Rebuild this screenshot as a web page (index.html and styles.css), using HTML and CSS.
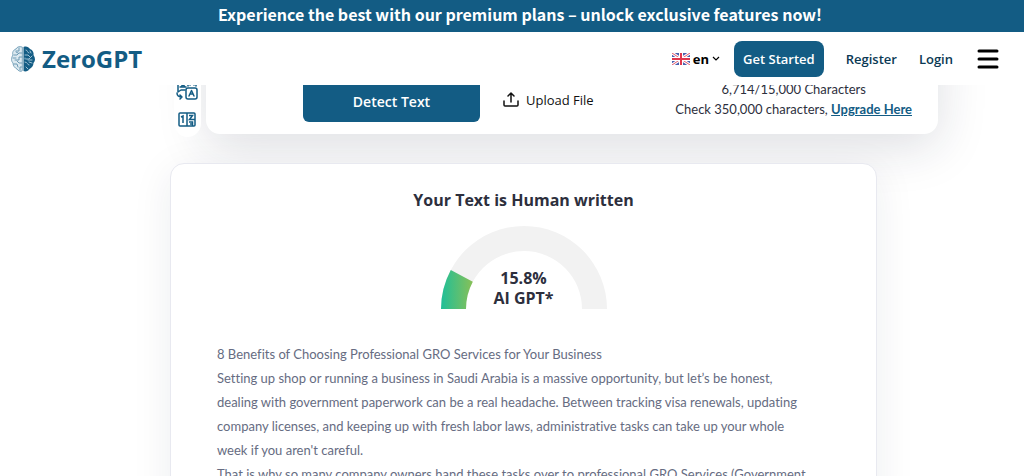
FILE: index.html
```
<!DOCTYPE html>
<html lang="en">
<head>
    <meta charset="UTF-8">
    <meta name="viewport" content="width=device-width, initial-scale=1">
    <title>ZeroGPT</title>
    <link rel="stylesheet" href="styles.css">
</head>
<body>
    <header class="header">
        <div class="banner">Experience the best with our premium plans – unlock exclusive features now!</div>
        <nav class="navbar">
            <a class="logo" href="#">
                <svg width="26" height="26" viewBox="0 0 26 26" fill="none" stroke-linecap="round">
                    <path d="M13.500 1c3-1 5 0 6.500 2 3 1 4 4 3.500 6 2 3 2 6 0 8 0 3-2 5-4 6-1 2-4 3-6 2z" fill="#135c84"/>
                    <path d="M16 4c2 0 1 3 3 3M15 9h3l2 2M22 10l-3 3h-3M15 16c3 0 2 3 4 3M22 17l-3-1M16 21l2 2M20 5l1 2M15 12v1M18 14l4 0" stroke="#9fc1d4"/>
                    <path d="M12 1C9 0 7 1 6 3 3 4 2 7 3 9c-2 3-2 6 0 8 0 3 2 5 4 6 1 2 4 3 5 2z" fill="#dce9f0" stroke="#7ba5bc"/>
                    <path d="M9 2v3H6M12 7H9L7 9H4M12 11H9v3H5M3 12h3M12 17H9l-2-2M4 18h3l1 3M12 21h-2v3M6 6l2 1" stroke="#6c9ab4"/>
                </svg>
                <span>ZeroGPT</span>
            </a>
            <button class="lang" type="button">
                <svg width="18" height="12" viewBox="0 0 18 12">
                    <path d="M0 0h18v12H0z" fill="#4a5fae"/>
                    <path d="M0 0l18 12M18 0L0 12" stroke="#fff" stroke-width="3"/>
                    <path d="M0 0l18 12M18 0L0 12" stroke="#e5596b"/>
                    <path d="M9 0v12M0 6h18" stroke="#fff" stroke-width="4"/>
                    <path d="M9 0v12M0 6h18" stroke="#e0374d" stroke-width="2"/>
                </svg>
                <span>en</span>
                <svg width="8" height="6" viewBox="0 0 8 6" fill="none" stroke="#000" stroke-width="1.200"><path d="M1 1l3 3 3-3"/></svg>
            </button>
            <button class="get-started" type="button">Get Started</button>
            <a class="nav-link" href="#">Register</a>
            <a class="nav-link" href="#">Login</a>
            <button class="menu" type="button" aria-label="Menu">
                <svg width="22" height="20" viewBox="0 0 22 20" stroke="#000" stroke-width="3" stroke-linecap="round">
                    <path d="M2 2h18M2 10h18M2 18h18"/>
                </svg>
            </button>
        </nav>
    </header>

    <main class="content">
        <section class="tool">
            <aside class="side">
                <a href="#" aria-label="Translate">
                    <svg width="22" height="22" viewBox="0 0 22 22" fill="none" stroke="#135c84" stroke-width="1.500" stroke-linecap="round" stroke-linejoin="round">
                        <path d="M9 12H5l-3 2V3q0-2 2-2h6q2 0 2 2v5M5 4l4 5M9 4L5 9M4 9h6"/>
                        <rect x="10" y="10" width="11" height="11" rx="2"/>
                        <path d="M13 18l2.500-5.500 2.500 5.500M14 16h3M1 15q0 4 5 4M4 17l2 2-2 2M14 7l2-2 2 2 2-3v4"/>
                    </svg>
                </a>
                <a href="#" aria-label="Word counter">
                    <svg width="18" height="15" viewBox="0 0 18 15" fill="none" stroke="#135c84" stroke-width="1.500">
                        <rect x="1" y="1" width="16" height="13" rx="1"/>
                        <path d="M9 1v13M3 5l2-1v7M11 3.500h3.500l-3 4H17M11 10h3.500v4M12 12h2.500"/>
                    </svg>
                </a>
            </aside>
            <div class="panel">
                <button class="detect" type="button">Detect Text</button>
                <button class="upload" type="button">
                    <svg width="16" height="16" viewBox="0 0 16 16" fill="none" stroke="#111" stroke-width="1.500" stroke-linecap="round" stroke-linejoin="round">
                        <path d="M1 9v4q0 1 1 1h12q1 0 1-1V9M8 10V2M5 4l3-3 3 3"/>
                    </svg>
                    <span>Upload File</span>
                </button>
                <div class="limits">
                    6,714/15,000 Characters<br>
                    Check 350,000 characters, <a href="#">Upgrade Here</a>
                </div>
            </div>
        </section>

        <section class="result">
            <h2>Your Text is Human written</h2>
            <div class="gauge">
                <svg width="166" height="83" viewBox="0 0 166 83">
                    <defs>
                        <linearGradient id="score">
                            <stop offset="0" stop-color="#1fbf98"/>
                            <stop offset="1" stop-color="#88c057"/>
                        </linearGradient>
                    </defs>
                    <path d="M0 83a83 83 0 0 1 166 0h-25a58 58 0 0 0-116 0z" fill="#f2f2f2"/>
                    <path d="M0 83A83 83 0 0 1 9.800 44L31.800 55.700A58 58 0 0 0 25 83z" fill="url(#score)"/>
                </svg>
                <div class="gauge-text">15.8%<br>AI GPT*</div>
            </div>
            <div class="text">
                <p>8 Benefits of Choosing Professional GRO Services for Your Business</p>
                <p>Setting up shop or running a business in Saudi Arabia is a massive opportunity, but let’s be honest, dealing with government paperwork can be a real headache. Between tracking visa renewals, updating company licenses, and keeping up with fresh labor laws, administrative tasks can take up your whole week if you aren't careful.</p>
                <p>That is why so many company owners hand these tasks over to professional GRO Services (Government</p>
            </div>
        </section>
    </main>
</body>
</html>
```
FILE: styles.css
```
* {
    box-sizing: border-box;
}
html {
    overflow: hidden;
}
body {
    margin: 0;
    font-family: "Open Sans", "Noto Sans", sans-serif;
    font-size: 13px;
    color: #2d2f3d;
    background-color: #fff;
}
button {
    font-family: inherit;
    border: none;
    padding: 0;
    background: none;
    cursor: pointer;
}
svg {
    display: block;
    flex-shrink: 0;
}
.header {
    position: fixed;
    top: 0;
    left: 0;
    right: 0;
    z-index: 10;
    background-color: #fff;
}
.banner {
    height: 32px;
    padding: 0 8px 0 24px;
    line-height: 28px;
    text-align: center;
    font-family: "Noto Sans CJK SC", sans-serif;
    font-size: 16px;
    font-weight: 700;
    white-space: nowrap;
    color: #fff;
    background-color: #135c84;
}
.navbar {
    display: flex;
    align-items: center;
    height: 53px;
    padding: 0 25px 0 10px;
}
.logo {
    display: flex;
    align-items: center;
    gap: 6px;
    margin-right: auto;
    font-size: 24px;
    font-weight: 700;
    color: #135c84;
    text-decoration: none;
}
.lang {
    display: flex;
    align-items: center;
    gap: 3px;
    margin-right: 14px;
    font-size: 13px;
    font-weight: 700;
    color: #000;
}
.get-started {
    height: 36px;
    padding: 0 9px;
    border-radius: 8px;
    font-size: 13px;
    font-weight: 600;
    color: #fff;
    background-color: #135c84;
}
.nav-link {
    margin-left: 22px;
    font-weight: 600;
    color: #0b3954;
    text-decoration: none;
}
.menu {
    margin-left: 24px;
}
.content {
    padding: 0 86px 0 174px;
}
.tool {
    display: flex;
    align-items: flex-start;
    gap: 5px;
}
.side {
    display: flex;
    flex-direction: column;
    align-items: center;
    gap: 12px;
    position: relative;
    width: 27px;
    padding: 78px 2px 10px 0;
    border-radius: 0 0 14px 14px;
    background-color: #fff;
}
.panel {
    display: flex;
    align-items: flex-end;
    flex: 1;
    height: 134px;
    padding: 0 26px 12px 97px;
    border-radius: 0 0 14px 14px;
    background-color: #fff;
    box-shadow: 0 12px 50px rgba(30, 35, 60, 0.15);
}
.detect {
    width: 177px;
    height: 44px;
    padding-top: 2px;
    border-radius: 6px;
    font-size: 14px;
    font-weight: 600;
    color: #fff;
    background-color: #135c84;
}
.upload {
    display: flex;
    align-items: center;
    gap: 7px;
    height: 44px;
    margin-left: 23px;
    font-size: 13px;
    color: #111;
}
.limits {
    margin-left: auto;
    padding-bottom: 3px;
    font-family: Lato, "Open Sans", sans-serif;
    font-size: 13px;
    line-height: 20px;
    text-align: center;
}
.limits a {
    font-weight: 700;
    color: #135c84;
}
.result {
    position: relative;
    margin: 26px 61px 0 -4px;
    padding: 24px 46px;
    border: 1px solid #e8e9f0;
    border-radius: 14px;
    background-color: #fff;
    box-shadow: 0 8px 40px rgba(30, 35, 60, 0.08);
}
.result h2 {
    margin: 0 0 14px;
    font-size: 16px;
    line-height: 24px;
    text-align: center;
}
.gauge {
    display: flex;
    justify-content: center;
    position: relative;
}
.gauge-text {
    position: absolute;
    bottom: 1px;
    font-size: 16px;
    font-weight: 700;
    line-height: 20px;
    text-align: center;
}
.text {
    margin-top: 33px;
    padding-right: 16px;
    font-family: Lato, "Open Sans", sans-serif;
    font-variant-ligatures: none;
    line-height: 24px;
    color: #666c82;
}
.text p {
    margin: 0;
}
```
